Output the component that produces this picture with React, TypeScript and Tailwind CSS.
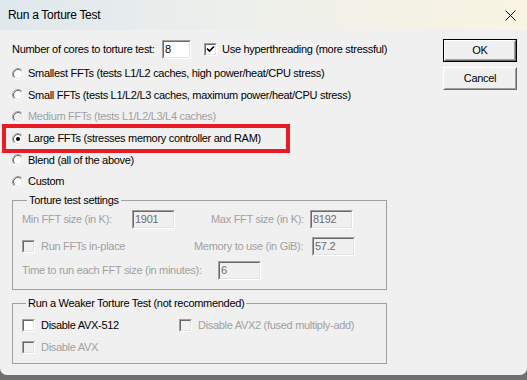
import React from 'react'

const txt = "text-[11px] leading-[13px] tracking-[-0.3px] whitespace-nowrap"

function Radio({ checked = false, disabled = false }: { checked?: boolean; disabled?: boolean }) {
  return (
    <svg width="12" height="12" viewBox="0 0 12 12" className="shrink-0">
      <circle cx="6" cy="6" r="4.5" fill={disabled ? '#f0f0f0' : '#ffffff'} />
      <path d="M2.11 9.89 A5.5 5.5 0 0 1 9.89 2.11" fill="none" stroke="#a0a0a0" />
      <path d="M9.89 2.11 A5.5 5.5 0 0 1 2.11 9.89" fill="none" stroke="#ffffff" />
      <path d="M2.82 9.18 A4.5 4.5 0 0 1 9.18 2.82" fill="none" stroke="#696969" />
      <path d="M9.18 2.82 A4.5 4.5 0 0 1 2.82 9.18" fill="none" stroke="#e3e3e3" />
      {checked && <circle cx="6" cy="6" r="2" fill="#000" />}
    </svg>
  )
}

function Check({ checked = false, disabled = false }: { checked?: boolean; disabled?: boolean }) {
  return (
    <div className="w-[13px] h-[13px] shrink-0 border border-t-[#a0a0a0] border-l-[#a0a0a0] border-b-white border-r-white">
      <div
        className={`w-full h-full border border-t-[#696969] border-l-[#696969] border-b-[#e3e3e3] border-r-[#e3e3e3] flex items-center justify-center ${
          disabled ? 'bg-[#f0f0f0]' : 'bg-white'
        }`}
      >
        {checked && (
          <svg width="9" height="9" viewBox="0 0 9 9">
            <path d="M1 3.5 L3.5 6 L8 1.5" fill="none" stroke="#000" strokeWidth="1.7" />
          </svg>
        )}
      </div>
    </div>
  )
}

function Field({ value, disabled = false, w }: { value: string; disabled?: boolean; w: string }) {
  return (
    <div className={`${w} h-[19px] shrink-0 border border-t-[#a0a0a0] border-l-[#a0a0a0] border-b-white border-r-white`}>
      <div
        className={`w-full h-full border border-t-[#696969] border-l-[#696969] border-b-[#e3e3e3] border-r-[#e3e3e3] flex items-center pl-[1px] ${txt} ${
          disabled ? 'bg-[#f0f0f0] text-[#6d6d6d]' : 'bg-white text-black'
        }`}
      >
        {value}
      </div>
    </div>
  )
}

function Btn({ label, isDefault = false }: { label: string; isDefault?: boolean }) {
  const inner = (
    <div className="w-full h-full border border-t-white border-l-white border-b-[#696969] border-r-[#696969]">
      <div className={`w-full h-full border border-t-[#f0f0f0] border-l-[#f0f0f0] border-b-[#a0a0a0] border-r-[#a0a0a0] flex items-center justify-center text-black ${txt}`}>
        {label}
      </div>
    </div>
  )
  return (
    <div className={`w-[74px] h-[23px] bg-[#f0f0f0] ${isDefault ? 'border border-[#000]' : ''}`}>{inner}</div>
  )
}

function RadioRow({ label, checked, disabled }: { label: string; checked?: boolean; disabled?: boolean }) {
  return (
    <div className="h-[21.6px] flex items-center">
      <Radio checked={checked} disabled={disabled} />
      <span className={`ml-[4px] ${txt} ${disabled ? 'text-[#a0a0a0]' : 'text-black'}`}>{label}</span>
    </div>
  )
}

export default function App() {
  return (
    <div className="w-[527px] h-[380px] bg-[#707070] overflow-hidden font-['Liberation_Sans',Arial,sans-serif]">
      <div className="w-[527px] h-[375px] bg-[#f0f0f0] rounded-b-[7px] overflow-hidden flex flex-col">
        {/* title bar */}
        <div className="h-[30px] shrink-0 flex items-center justify-between pl-[8px] pr-[11px] bg-gradient-to-r from-[#dfe8ee] via-[#eef0ea] to-[#f9f4e2]">
          <span className="text-[12px] tracking-[-0.3px] text-black">Run a Torture Test</span>
          <svg width="11" height="11" viewBox="0 0 11 11">
            <path d="M0.5 0.5 L10.5 10.5 M10.5 0.5 L0.5 10.5" stroke="#000" strokeWidth="1" />
          </svg>
        </div>

        {/* body */}
        <div className="relative flex-1 flex pl-[12px]">
          <div className="w-[375px] flex flex-col">
            <div className="mt-[10px] h-[19px] flex items-center">
              <span className={`w-[158px] ${txt} text-black`}>Number of cores to torture test:</span>
              <Field value="8" w="w-[29px]" />
              <div className="ml-[13px]">
                <Check checked />
              </div>
              <span className={`ml-[5px] ${txt} text-black`}>Use hyperthreading (more stressful)</span>
            </div>

            <div className="mt-[4px] flex flex-col">
              <RadioRow label="Smallest FFTs (tests L1/L2 caches, high power/heat/CPU stress)" />
              <RadioRow label="Small FFTs (tests L1/L2/L3 caches, maximum power/heat/CPU stress)" />
              <RadioRow label="Medium FFTs (tests L1/L2/L3/L4 caches)" disabled />
              <RadioRow label="Large FFTs (stresses memory controller and RAM)" checked />
              <RadioRow label="Blend (all of the above)" />
              <RadioRow label="Custom" />
            </div>

            {/* Torture test settings */}
            <fieldset className="mt-[1px] w-[375px] border border-[#a0a0a0] pl-[9px] pt-[2px] pb-[8.5px]">
              <legend className={`ml-[5px] px-[2px] ${txt} text-black`}>Torture test settings</legend>
              <div className="h-[21px] flex items-center">
                <span className={`w-[110px] ${txt} text-[#a0a0a0]`}>Min FFT size (in K):</span>
                <Field value="1901" disabled w="w-[43px]" />
                <span className={`ml-[36px] w-[99px] ${txt} text-[#a0a0a0]`}>Max FFT size (in K):</span>
                <Field value="8192" disabled w="w-[43px]" />
              </div>
              <div className="mt-[7px] h-[20px] flex items-center">
                <div className="w-[172px] flex items-center">
                  <Check disabled />
                  <span className={`ml-[6px] ${txt} text-[#a0a0a0]`}>Run FFTs in-place</span>
                </div>
                <span className={`w-[118px] ${txt} text-[#a0a0a0]`}>Memory to use (in GiB):</span>
                <Field value="57.2" disabled w="w-[43px]" />
              </div>
              <div className="mt-[4px] h-[20px] flex items-center">
                <span className={`w-[196px] ${txt} text-[#a0a0a0]`}>Time to run each FFT size (in minutes):</span>
                <Field value="6" disabled w="w-[43px]" />
              </div>
            </fieldset>

            {/* Weaker test */}
            <fieldset className="mt-[6.5px] w-[375px] border border-[#a0a0a0] pl-[9px] pt-[4.5px] pb-[5px]">
              <legend className={`ml-[4px] px-[2px] ${txt} text-black`}>Run a Weaker Torture Test (not recommended)</legend>
              <div className="h-[22px] flex items-center">
                <div className="w-[157px] flex items-center">
                  <Check />
                  <span className={`ml-[6px] ${txt} text-black`}>Disable AVX-512</span>
                </div>
                <Check disabled />
                <span className={`ml-[6px] ${txt} text-[#a0a0a0]`}>Disable AVX2 (fused multiply-add)</span>
              </div>
              <div className="h-[22px] flex items-center">
                <Check disabled />
                <span className={`ml-[6px] ${txt} text-[#a0a0a0]`}>Disable AVX</span>
              </div>
            </fieldset>
          </div>

          <div className="ml-[56px] pt-[9px] flex flex-col gap-[5px]">
            <Btn label="OK" isDefault />
            <Btn label="Cancel" />
          </div>

          {/* red highlight annotation */}
          <div className="absolute left-[2px] top-[94px] w-[288px] h-[29px] border-[4px] border-[#e81c24] pointer-events-none" />
        </div>
      </div>
    </div>
  )
}
